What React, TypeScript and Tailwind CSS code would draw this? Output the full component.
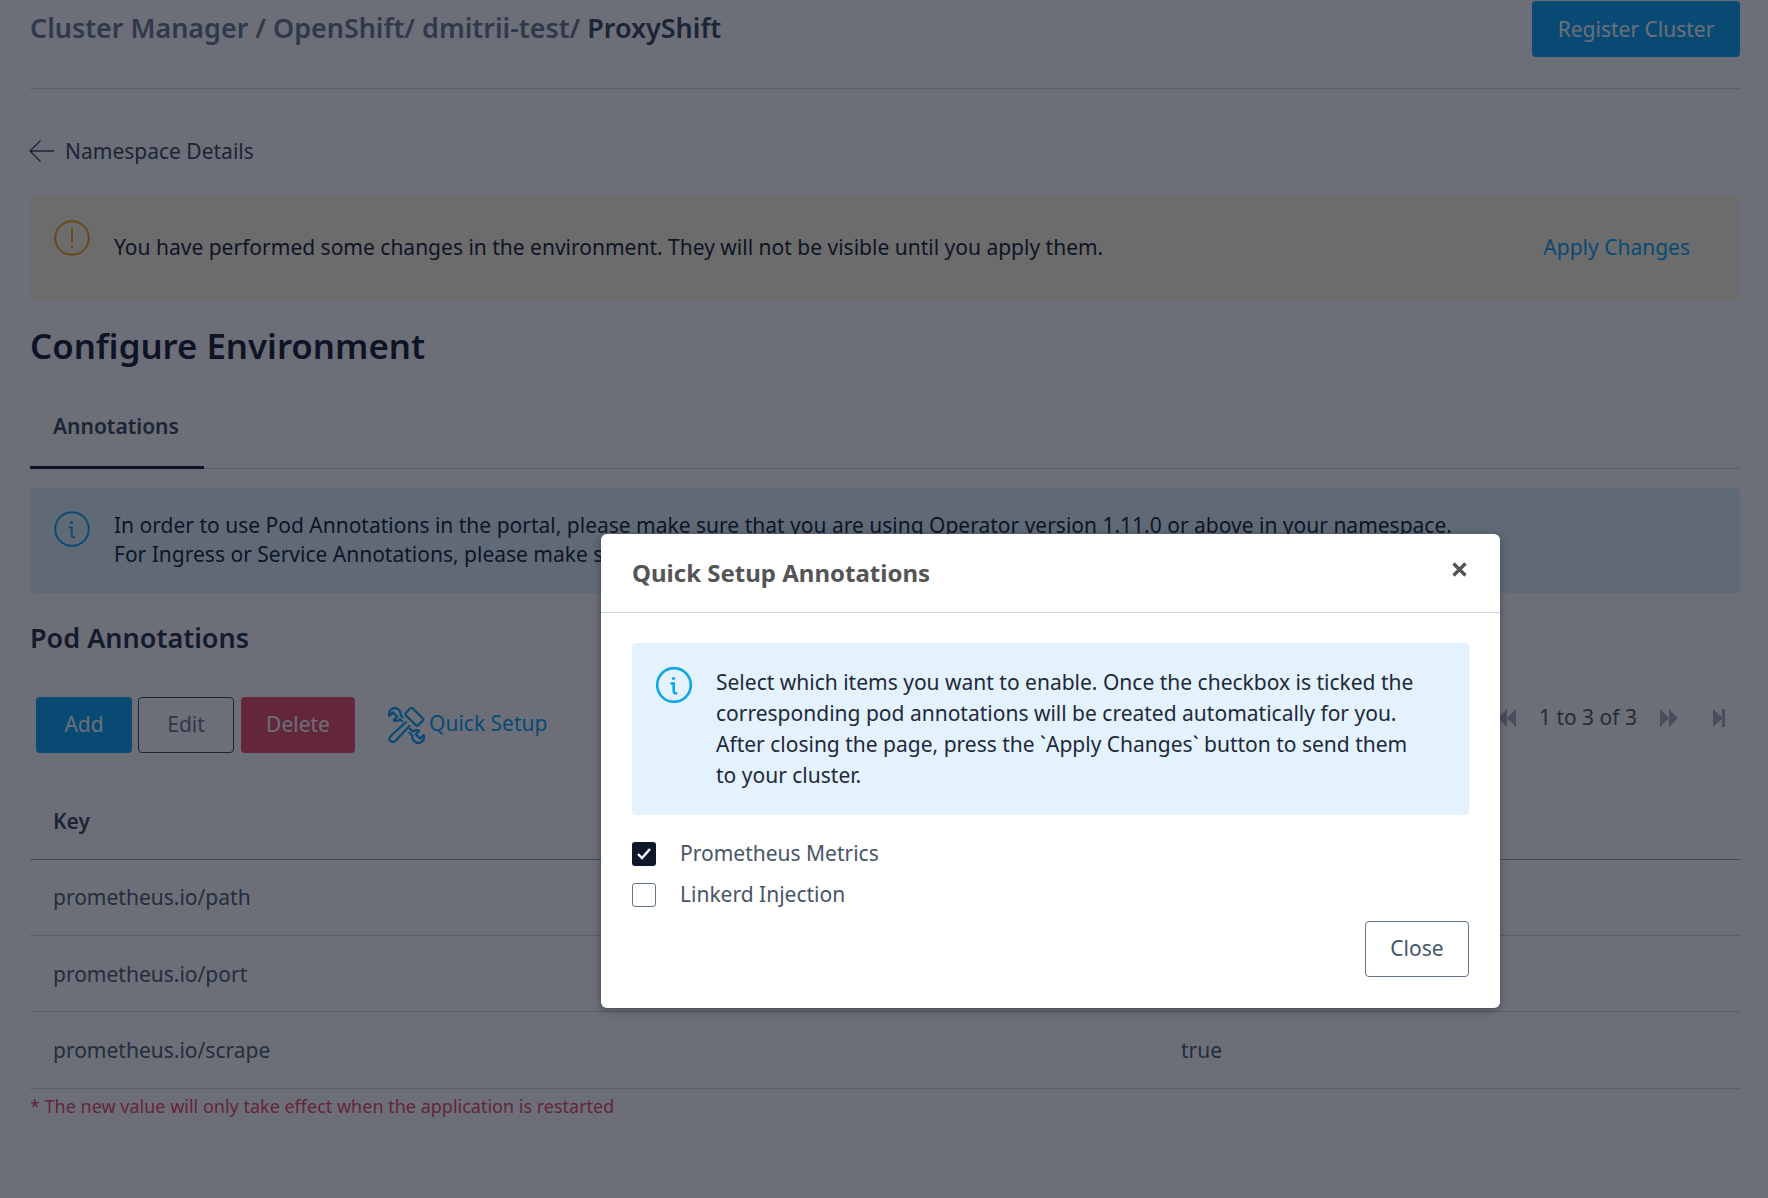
const font = { fontFamily: '"Noto Sans", sans-serif' }

function CircleIcon({ color, kind, weight = 2 }: { color: string; kind: "info" | "warn"; weight?: number }) {
  return (
    <svg width="36" height="36" viewBox="0 0 36 36" fill="none" stroke={color} strokeWidth={weight} strokeLinecap="round">
      <circle cx="18" cy="18" r="16.8" />
      {kind === "info" ? (
        <>
          <circle cx="17.5" cy="11.5" r="1.6" fill={color} stroke="none" />
          <path d="M15.5 16.5h2.2v8c0 1.3 1 2 2.5 1.7" />
        </>
      ) : (
        <>
          <path d="M18 9v13" />
          <circle cx="18" cy="27" r="1.3" fill={color} stroke="none" />
        </>
      )}
    </svg>
  )
}

function ToolsIcon() {
  return (
    <svg className="ml-px" width="37" height="37" viewBox="0 0 38 38" fill="none" stroke="#00a0f5" strokeWidth="2.3" strokeLinejoin="round" strokeLinecap="round">
      {/* hammer */}
      <rect x="18" y="5" width="18" height="10" rx="2" transform="rotate(45 27 10)" />
      <path d="M18.5 15.5L2.5 30a3.5 3.5 0 0 0 5 5L22 19.5" />
      {/* top left wrench */}
      <path d="M9 1.5C5 0 1 3 1 7c0 .8.1 1.5.4 2.2L5 5.5l4.5 4.5-3.6 3.6c2.3 1 5 .5 6.6-1.1l2 2" />
      <path d="M9 1.5c3 1.5 4.5 4 4 7l2 2" />
      {/* bottom right wrench */}
      <path d="M29 36.5c4 1.5 8-1.5 8-5.5 0-.8-.1-1.5-.4-2.2L33 32.5 28.5 28l3.6-3.6c-2.3-1-5-.5-6.6 1.1l-3-3" />
      <path d="M29 36.5c-3-1.5-4.5-4-4-7l-3-3" />
    </svg>
  )
}

function Skip({ dir }: { dir: "back" | "forward" | "last" }) {
  return (
    <svg width="20" height="20" viewBox="0 0 20 20" fill="#a3aab8">
      {dir === "back" && <path d="M10 1v18L1 10zM19 1v18l-9-9z" />}
      {dir === "forward" && <path d="M1 1v18l9-9zM10 1v18l9-9z" />}
      {dir === "last" && <path d="M3 1v18l10-9zM12 1h3v18h-3z" />}
    </svg>
  )
}

const rows = [
  { key: "prometheus.io/path", value: "", cell: "flex h-[76px] items-center border-b border-gray-300" },
  { key: "prometheus.io/port", value: "", cell: "flex h-[76px] items-center border-b border-gray-300 pt-[3px]" },
  { key: "prometheus.io/scrape", value: "true", cell: "flex h-[76px] items-center pt-[2px]" },
]

export default function App() {
  return (
    <div className="relative h-screen overflow-hidden bg-white text-[#0f172a]" style={font}>
      <div className="pl-[30px] pr-[28px]">
        {/* Header */}
        <div className="flex h-[89px] items-start justify-between border-b border-gray-300">
          <h1 className="pt-[9px] text-[26.9px] leading-[38px] font-semibold text-[#64748b]">
            Cluster Manager / OpenShift/ dmitrii-test/ <span className="text-[#334155]">ProxyShift</span>
          </h1>
          <button className="mt-px flex h-[56px] w-[208px] items-center justify-center rounded bg-[#00a0f5] pt-[2px] text-[21px] text-white">
            Register Cluster
          </button>
        </div>

        {/* Back */}
        <div className="mt-[47px] flex h-[30px] items-center gap-[11px] text-[21px] text-[#334155]">
          <svg className="-ml-px" width="25" height="24" viewBox="0 0 25 24" fill="none" stroke="#334155" strokeWidth="1.4">
            <path d="M25 12H1M11.5 1.5L1 12l10.5 10.5" />
          </svg>
          <span className="translate-y-px">Namespace Details</span>
        </div>

        {/* Warning */}
        <div className="relative mt-[30px] flex h-[104px] items-center rounded bg-[#fef6e0] pl-[84px] pr-[50px] text-[21px]">
          <div className="absolute left-[24px] top-[24px]">
            <CircleIcon color="#f59e0b" kind="warn" />
          </div>
          <span className="flex-1">You have performed some changes in the environment. They will not be visible until you apply them.</span>
          <span className="text-[#00a0f5]">Apply Changes</span>
        </div>

        <h2 className="mt-[21px] text-[34.8px] leading-[50px] font-semibold">Configure Environment</h2>

        {/* Tabs */}
        <div className="mt-[27px] flex h-[71px] border-b border-gray-300">
          <div className="flex h-[71px] w-[174px] items-center border-b-[3px] border-[#0f172a] pb-[10px] pl-[23px] text-[21px] font-semibold text-[#334155]">
            Annotations
          </div>
        </div>

        {/* Info */}
        <div className="relative mt-[19px] h-[105px] rounded bg-[#e0f2fc] pl-[84px] pt-[23px] text-[21px] leading-[29px]">
          <div className="absolute left-[24px] top-[23px]">
            <CircleIcon color="#00a0f5" kind="info" />
          </div>
          <p>In order to use Pod Annotations in the portal, please make sure that you are using Operator version 1.11.0 or above in your namespace.</p>
          <p>For Ingress or Service Annotations, please make sure that you are using Operator version 1.12.0 or above in your namespace.</p>
        </div>

        <h3 className="mt-[27px] text-[27px] leading-[36px] font-semibold text-[#1e293b]">Pod Annotations</h3>

        {/* Toolbar */}
        <div className="mt-[41px] flex h-[56px] items-center">
          <button className="ml-[6px] h-[56px] w-[96px] rounded bg-[#00a0f5] text-[21px] text-white">Add</button>
          <button className="ml-[6px] h-[56px] w-[96px] rounded border border-[#334155] text-[21px] text-[#64748b]">Edit</button>
          <button className="ml-[7px] h-[56px] w-[114px] rounded bg-[#e94560] text-[21px] text-white">Delete</button>
          <div className="ml-[32px] flex items-center gap-[4px] text-[21px] text-[#00a0f5]">
            <ToolsIcon />
            <span className="-translate-y-px">Quick Setup</span>
          </div>
          <div className="ml-auto mr-[10px] flex -translate-y-[7px] items-center text-[21px] text-[#475569]">
            <Skip dir="back" />
            <span className="mx-[22px]">1 to 3 of 3</span>
            <Skip dir="forward" />
            <span className="ml-[31px]"><Skip dir="last" /></span>
          </div>
        </div>

        {/* Table */}
        <div className="mt-[31px] grid grid-cols-[1151px_1fr] border-b border-gray-300 text-[21px] text-[#475569]">
          <div className="flex h-[76px] items-center border-b border-gray-400 pl-[23px] font-semibold text-[#334155]">Key</div>
          <div className="border-b border-gray-400" />
          {rows.map((r) => (
            <div key={r.key} className="contents">
              <div className={r.cell}><span className="pl-[23px]">{r.key}</span></div>
              <div className={r.cell}>{r.value}</div>
            </div>
          ))}
        </div>

        <p className="mt-[3px] text-[18px] leading-[28px] text-[#e8405a]">* The new value will only take effect when the application is restarted</p>
      </div>

      {/* Backdrop */}
      <div className="absolute inset-0 bg-[rgba(15,20,35,0.61)]">
        {/* Modal */}
        <div className="absolute left-[601px] top-[534px] h-[474px] w-[899px] rounded-md bg-white shadow-[0_2px_8px_rgba(0,0,0,0.35)]">
          <div className="flex h-[79px] items-start justify-between border-b border-gray-300 pl-[31px] pr-[33px]">
            <h4 className="pt-[21px] text-[24px] leading-[36px] font-bold text-[#555555]">Quick Setup Annotations</h4>
            <svg className="mt-[28px]" width="15" height="15" viewBox="0 0 15 15" stroke="#555555" strokeWidth="3.4">
              <path d="M1.5 1.5l12 12M13.5 1.5l-12 12" />
            </svg>
          </div>

          <div className="px-[31px] pt-[30px]">
            <div className="flex h-[172px] rounded bg-[#e3f2fc] pl-[24px] pr-[50px] pt-[24px] text-[21px] leading-[31px] text-[#1e293b]">
              <div className="mr-[24px] shrink-0">
                <CircleIcon color="#0ea5e9" kind="info" weight={2.6} />
              </div>
              <p>
                Select which items you want to enable. Once the checkbox is ticked the corresponding pod annotations will be created automatically for you. After closing the page, press the `Apply Changes` button to send them to your cluster.
              </p>
            </div>

            <label className="mt-[26px] flex h-[26px] items-center gap-[24px] text-[21px] text-[#475569]">
              <span className="flex h-[24px] w-[24px] items-center justify-center rounded-[3px] bg-[#0f172a]">
                <svg width="16" height="14" viewBox="0 0 16 14" fill="none" stroke="#fff" strokeWidth="2.4">
                  <path d="M2 7l4 4 8-9" />
                </svg>
              </span>
              Prometheus Metrics
            </label>
            <label className="mt-[15px] flex h-[26px] items-center gap-[24px] text-[21px] text-[#475569]">
              <span className="h-[24px] w-[24px] rounded-[3px] border border-[#64748b]" />
              Linkerd Injection
            </label>

            <div className="mt-[13px] flex justify-end">
              <button className="h-[56px] w-[104px] rounded border border-[#64748b] text-[21px] text-[#475569]">Close</button>
            </div>
          </div>
        </div>
      </div>
    </div>
  )
}
